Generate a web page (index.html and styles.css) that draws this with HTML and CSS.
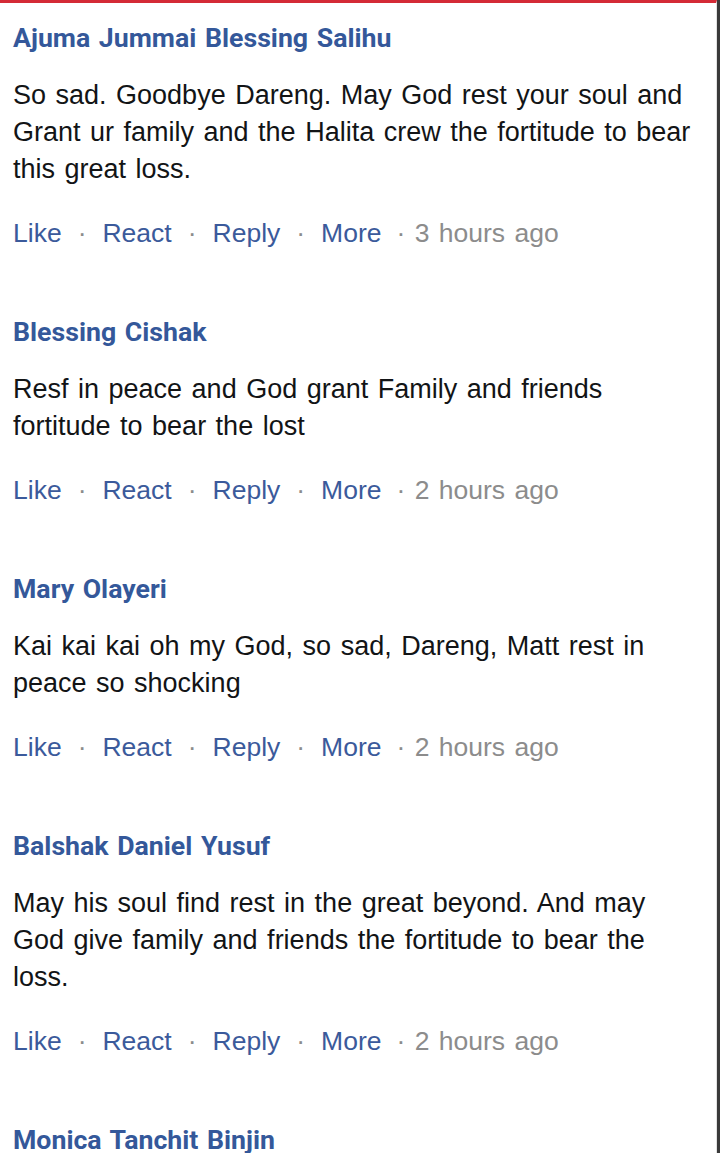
FILE: index.html
```html
<!DOCTYPE html>
<html>
<head>
<meta charset="utf-8">
<link rel="stylesheet" href="styles.css">
</head>
<body>
<div class="frame">
  <div class="feed">
    <div class="comment">
      <div class="name">Ajuma Jummai Blessing Salihu</div>
      <div class="text">So sad. Goodbye Dareng. May God rest your soul and Grant ur family and the Halita crew the fortitude to bear this great loss.</div>
      <div class="actions"><span class="link">Like</span><span class="dot">·</span><span class="link">React</span><span class="dot">·</span><span class="link">Reply</span><span class="dot">·</span><span class="link">More</span><span class="time">· 3 hours ago</span></div>
    </div>
    <div class="comment">
      <div class="name">Blessing Cishak</div>
      <div class="text">Resf in peace and God grant Family and friends fortitude to bear the lost</div>
      <div class="actions"><span class="link">Like</span><span class="dot">·</span><span class="link">React</span><span class="dot">·</span><span class="link">Reply</span><span class="dot">·</span><span class="link">More</span><span class="time">· 2 hours ago</span></div>
    </div>
    <div class="comment">
      <div class="name">Mary Olayeri</div>
      <div class="text">Kai kai kai oh my God, so sad, Dareng, Matt rest in peace so shocking</div>
      <div class="actions"><span class="link">Like</span><span class="dot">·</span><span class="link">React</span><span class="dot">·</span><span class="link">Reply</span><span class="dot">·</span><span class="link">More</span><span class="time">· 2 hours ago</span></div>
    </div>
    <div class="comment">
      <div class="name">Balshak Daniel Yusuf</div>
      <div class="text">May his soul find rest in the great beyond. And may God give family and friends the fortitude to bear the loss.</div>
      <div class="actions"><span class="link">Like</span><span class="dot">·</span><span class="link">React</span><span class="dot">·</span><span class="link">Reply</span><span class="dot">·</span><span class="link">More</span><span class="time">· 2 hours ago</span></div>
    </div>
    <div class="comment">
      <div class="name">Monica Tanchit Binjin</div>
    </div>
  </div>
  <div class="edge"></div>
</div>
</body>
</html>
```
FILE: styles.css
```css
html, body {
  margin: 0;
  padding: 0;
  background: #fff;
}
.frame {
  display: flex;
  height: 1153px;
  overflow: hidden;
}
.feed {
  flex: 1;
  border-top: 3px solid #d42a36;
  border-right: 1px solid #e2e2e2;
  padding: 0 12px 0 13px;
}
.edge {
  width: 3px;
  background: #3a3a3a;
}
.comment {
  padding-top: 18px;
  padding-bottom: 45px;
}
.name {
  font-family: Roboto, "Liberation Sans", sans-serif;
  font-weight: 700;
  font-size: 26.7px;
  line-height: 34px;
  color: #34589a;
  word-spacing: 2px;
}
.text {
  margin-top: 22px;
  font-family: "Liberation Sans", Arial, sans-serif;
  font-size: 27px;
  line-height: 37px;
  color: #121416;
  word-spacing: 2px;
}
.actions {
  margin-top: 27px;
  font-family: "Liberation Sans", Arial, sans-serif;
  font-size: 26.5px;
  line-height: 37px;
  color: #3b5a9b;
  display: flex;
  white-space: pre;
}
.dot {
  color: #8c8c8c;
  padding: 0 16px;
}
.time {
  color: #8c8c8c;
  padding-left: 15px;
  word-spacing: 2px;
}
```
